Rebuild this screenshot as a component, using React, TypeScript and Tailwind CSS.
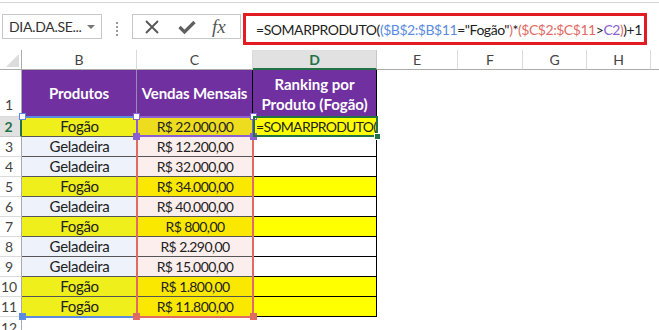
import React from 'react';

const font = { fontFamily: 'Lato, "Liberation Sans", sans-serif' };

type Row = { n: number; prod: string; val: string };

const rows: Row[] = [
  { n: 2, prod: 'Fogão', val: 'R$ 22.000,00' },
  { n: 3, prod: 'Geladeira', val: 'R$ 12.200,00' },
  { n: 4, prod: 'Geladeira', val: 'R$ 32.000,00' },
  { n: 5, prod: 'Fogão', val: 'R$ 34.000,00' },
  { n: 6, prod: 'Geladeira', val: 'R$ 40.000,00' },
  { n: 7, prod: 'Fogão', val: 'R$ 800,00' },
  { n: 8, prod: 'Geladeira', val: 'R$ 2.290,00' },
  { n: 9, prod: 'Geladeira', val: 'R$ 15.000,00' },
  { n: 10, prod: 'Fogão', val: 'R$ 1.800,00' },
  { n: 11, prod: 'Fogão', val: 'R$ 11.800,00' },
];

const cols = ['B', 'C', 'D', 'E', 'F', 'G', 'H'];

function Handle({ className }: { className: string }) {
  return <div className={`absolute h-[7px] w-[7px] ${className}`} />;
}

function FormulaBar() {
  return (
    <div className="relative h-[48px] border-t border-[#d6d6d6] mt-[2px] flex items-start">
      {/* name box */}
      <div className="mt-[11px] ml-[2px] h-[25px] w-[100px] border border-[#c6c6c6] flex items-center pl-[6px] pr-[6px] text-[14px] tracking-[-0.3px] text-[#333]">
        <span className="flex-1">DIA.DA.SE...</span>
        <span className="w-0 h-0 border-l-[4px] border-r-[4px] border-t-[4px] border-l-transparent border-r-transparent border-t-[#777]" />
      </div>
      {/* dots */}
      <div className="mt-[19px] ml-[14px] flex flex-col gap-[2px]">
        <span className="h-[2px] w-[2px] bg-[#9a9a9a]" />
        <span className="h-[2px] w-[2px] bg-[#9a9a9a]" />
        <span className="h-[2px] w-[2px] bg-[#9a9a9a]" />
        <span className="h-[2px] w-[2px] bg-[#9a9a9a]" />
      </div>
      {/* buttons */}
      <div className="mt-[11px] ml-[14px] h-[25px] w-[109px] border border-[#c6c6c6] flex items-center">
        <svg width="14" height="14" viewBox="0 0 14 14" className="ml-[12px]">
          <path d="M1 1 L13 13 M13 1 L1 13" stroke="#555" strokeWidth="1.8" />
        </svg>
        <svg width="18" height="14" viewBox="0 0 18 14" className="ml-[19px]">
          <path d="M1.5 7 L6.5 12 L16.5 2" stroke="#606060" strokeWidth="3.2" fill="none" />
        </svg>
        <span
          className="ml-[16px] text-[19px] italic text-[#555] leading-none"
          style={{ fontFamily: '"Liberation Serif", "DejaVu Serif", serif' }}
        >
          fx
        </span>
      </div>
      {/* formula */}
      <div className="mt-[10px] ml-[2px] h-[32px] w-[404px] border-[3px] border-[#e31b23] flex items-center pl-[10px] text-[14px] text-[#222] whitespace-nowrap tracking-[-0.45px]">
        <span>=SOMARPRODUTO(</span>
        <span className="text-[#5b8be0]">(</span>
        <span className="text-[#5b8be0]">$B$2:$B$11</span>
        <span>="Fogão"</span>
        <span className="text-[#e06a64]">)</span>
        <span>*</span>
        <span className="text-[#e06a64]">(</span>
        <span className="text-[#e06a64]">$C$2:$C$11</span>
        <span>&gt;</span>
        <span className="text-[#8b60d0]">C2</span>
        <span className="text-[#e06a64]">)</span>
        <span>)+1</span>
        <span className="ml-[2px] h-[18px] w-[1px] bg-[#1e5bd8]" />
      </div>
    </div>
  );
}

export default function App() {
  return (
    <div className="w-[659px] h-[330px] overflow-hidden bg-white text-[14px] text-[#222]" style={font}>
      <FormulaBar />
      <div className="relative">
        <div className="grid grid-cols-[22px_115px_116px_124px_81px_65px_64px_64px_8px] grid-rows-[20px_47px_repeat(11,20px)]">
          {/* header row */}
          <div className="relative border-r border-b border-[#ababab] bg-white">
            <svg width="13" height="13" viewBox="0 0 13 13" className="absolute right-[2px] bottom-[2px]">
              <polygon points="13,0 13,13 0,13" fill="#dcdcdc" />
            </svg>
          </div>
          {cols.map((c) =>
            c === 'D' ? (
              <div key={c} className="flex items-center justify-center bg-[#e1e1e1] border-r border-[#c8c8c8] border-b-2 border-b-[#217346] text-[#217346] font-bold text-[14px]">
                {c}
              </div>
            ) : (
              <div key={c} className="flex items-center justify-center border-r border-b border-r-[#dadada] border-b-[#ababab] text-[#444] text-[14px]">
                {c}
              </div>
            )
          )}
          <div className="border-b border-[#ababab]" />

          {/* row 1 */}
          <div className="flex items-end justify-center pr-[3px] pb-[1px] border-r border-b border-r-[#ababab] border-b-[#dadada] text-[#444] text-[14px]">1</div>
          <div className="flex items-center justify-center bg-[#7030a0] text-white font-bold text-[15px] tracking-[-0.1px] border-r border-[#9b8ab0]">Produtos</div>
          <div className="flex items-center justify-center bg-[#7030a0] text-white font-bold text-[15px] tracking-[-0.1px] border-r border-black">Vendas Mensais</div>
          <div className="flex items-center justify-center text-center bg-[#7030a0] text-white font-bold text-[15px] border-r border-black leading-[20px]">
            Ranking por
            <br />
            Produto (Fogão)
          </div>
          <div />
          <div />
          <div />
          <div />
          <div />

          {rows.map((r) => {
            const isF = r.prod === 'Fogão';
            const sel = r.n === 2;
            return (
              <React.Fragment key={r.n}>
                {sel ? (
                  <div className="flex items-center justify-center pr-[3px] bg-[#e1e1e1] border-r-2 border-r-[#217346] border-b border-b-[#c8c8c8] text-[#217346] font-bold text-[14px]">
                    {r.n}
                  </div>
                ) : (
                  <div className="flex items-center justify-center pr-[3px] border-r border-b border-r-[#ababab] border-b-[#dadada] text-[#444] text-[14px]">
                    {r.n}
                  </div>
                )}
                <div className={`flex items-center justify-center border-b border-[#555] text-[15px] tracking-[-0.3px] ${isF ? 'bg-[#efef1c]' : 'bg-[#edf2fb]'}`}>{r.prod}</div>
                <div className={`flex items-center justify-center border-b border-[#555] text-[14px] tracking-[-0.6px] ${sel ? 'bg-[#eedc1e]' : isF ? 'bg-[#fbe800]' : 'bg-[#fdeeee]'}`}>{r.val}</div>
                <div className={`flex items-center overflow-hidden whitespace-nowrap border-l border-r border-b border-black ${isF ? 'bg-[#ffff00]' : 'bg-white'}`}>
                  {sel && <span className="pl-[2px] text-[14px] tracking-[-0.7px] text-[#222]">=SOMARPRODUTO(</span>}
                </div>
                <div />
                <div />
                <div />
                <div />
                <div />
              </React.Fragment>
            );
          })}

          {/* row 12 */}
          <div className="flex items-center justify-center pr-[3px] border-r border-[#ababab] text-[#444] text-[14px]">12</div>
        </div>

        {/* reference outlines (overlay) */}
        {/* B2:B11 blue */}
        <div className="absolute left-[22px] top-[66px] w-[115px] h-[2px] bg-[#5b8be0]" />
        <div className="absolute left-[22px] top-[266px] w-[115px] h-[2px] bg-[#5b8be0]" />
        <Handle className="left-[19px] top-[63px] border border-[#5b8be0] bg-white" />
        <Handle className="left-[19px] top-[263px] bg-[#5b8be0]" />
        {/* C2:C11 red */}
        <div className="absolute left-[136px] top-[66px] w-[118px] h-[202px] border-2 border-[#e06a64]" />
        <Handle className="left-[133px] top-[263px] bg-[#e06a64]" />
        <Handle className="left-[250px] top-[263px] bg-[#e06a64]" />
        {/* C2 purple */}
        <div className="absolute left-[136px] top-[66px] w-[118px] h-[21px] border-2 border-[#8b60d0]" />
        <Handle className="left-[133px] top-[63px] border border-[#8b60d0] bg-white" />
        <Handle className="left-[250px] top-[63px] border border-[#8b60d0] bg-white" />
        <Handle className="left-[133px] top-[83px] bg-[#8b60d0]" />
        <Handle className="left-[250px] top-[83px] bg-[#8b60d0]" />
        {/* D2 selection */}
        <div className="absolute left-[253px] top-[66px] w-[125px] h-[21px] border-2 border-[#217346]" />
        <Handle className="left-[374px] top-[83px] bg-[#217346] border border-white" />
      </div>
    </div>
  );
}
